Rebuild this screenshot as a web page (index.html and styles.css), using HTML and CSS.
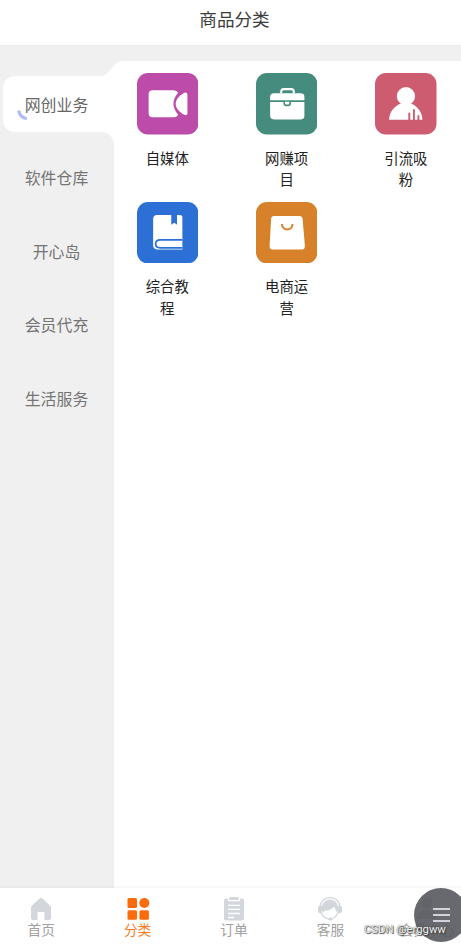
FILE: index.html
```
<!DOCTYPE html>
<html lang="zh-CN">
<head>
<meta charset="utf-8">
<title>商品分类</title>
<link rel="stylesheet" href="styles.css">
</head>
<body>
<div class="app">
  <header class="header">商品分类</header>
  <main class="main">
    <nav class="side">
      <div class="side-item active">网创业务
        <svg class="spinner" width="12" height="12" viewBox="0 0 12 12"><path d="M1.800 1.500C2 5.500 5 9.300 9.800 9.700" fill="none" stroke="#b0bcf6" stroke-width="3.300"/></svg>
      </div>
      <div class="side-item">软件仓库</div>
      <div class="side-item">开心岛</div>
      <div class="side-item">会员代充</div>
      <div class="side-item">生活服务</div>
    </nav>
    <section class="panel">
      <div class="card">
        <svg class="icon" viewBox="0 0 61 61"><rect width="61" height="61" rx="11" fill="#bc4ba9"/><path d="M15.500 17H36.500Q39.500 17 40.800 19.500Q31.500 30 40.800 41.500Q39.500 44 36.500 44H15.500Q11.500 44 11.500 40V21Q11.500 17 15.500 17Z" fill="#fff"/><path d="M47 19.500Q50 18.800 50 21.500V40Q50 42.500 47 41.500C35.500 35 35.500 26 47 19.500Z" fill="#fff"/></svg>
        <span class="label">自媒体</span>
      </div>
      <div class="card">
        <svg class="icon" viewBox="0 0 61 61"><rect width="61" height="61" rx="11" fill="#468c7e"/><path d="M25 20V18.500Q25 16 27.500 16H35Q37.500 16 37.500 18.500V20" fill="none" stroke="#fff" stroke-width="2"/><path d="M18 20H44.500Q48 20 48 23.500V27H14V23.500Q14 20 18 20ZM14 28.800H27.200V30Q27.200 33 30.200 33H31.800Q34.700 33 34.700 30V28.800H48V42.500Q48 46 44.500 46H18Q14 46 14 42.500Z" fill="#fff"/><path d="M28.800 28.500V30Q28.800 31.300 30 31.300H32Q33 31.300 33 30V28.500" fill="#fff"/></svg>
        <span class="label">网赚项目</span>
      </div>
      <div class="card">
        <svg class="icon" viewBox="0 0 61 61"><rect width="61" height="61" rx="11" fill="#ce5c71"/><circle cx="30.700" cy="23" r="9" fill="#fff"/><path d="M26 30H35.500C42 33 47 39 47 46.300H14C14 39 19 33 26 30Z" fill="#fff"/><path d="M34 39.500V47M38.600 36V47M43.100 42V47" stroke="#ce5c71" stroke-width="1.900"/></svg>
        <span class="label">引流吸粉</span>
      </div>
      <div class="card">
        <svg class="icon" viewBox="0 0 61 61"><rect width="61" height="61" rx="11" fill="#2d70d5"/><path d="M20 13H34V22.500L37 20.500L39.700 22.500V13H42Q45 13 45 15V47H20Q16 47 16 43V17Q16 13 20 13Z" fill="#fff"/><path d="M45 37.500H23Q18.500 37.500 18.500 41.500Q18.500 45.500 23 45.500H45" fill="none" stroke="#2d70d5" stroke-width="1.700"/></svg>
        <span class="label">综合教程</span>
      </div>
      <div class="card">
        <svg class="icon" viewBox="0 0 61 61"><rect width="61" height="61" rx="11" fill="#d7822b"/><path d="M18 14H43Q46 14 46.200 16.500L48.500 43.500Q48.500 47 46 47H16Q13.200 47 13.500 43.500L15 16.500Q15.200 14 18 14Z" fill="#fff"/><path d="M25.700 21.800C26 29 36 29 36.300 21.800" fill="none" stroke="#d7822b" stroke-width="2"/></svg>
        <span class="label">电商运营</span>
      </div>
    </section>
  </main>
  <footer class="tabs">
    <div class="tab">
      <svg class="tab-icon" viewBox="0 0 24 24"><path d="M10.300 1.800Q12 .3 13.700 1.800L21.500 9Q22 9.500 22 10.500V21Q22 23 20 23H15.500V16Q15.500 15 14.500 15H9.500Q8.500 15 8.500 16V23H4Q2 23 2 21V10.500Q2 9.500 2.500 9Z" fill="#d3d7dc"/></svg>
      <span>首页</span>
    </div>
    <div class="tab on">
      <svg class="tab-icon" viewBox="0 0 24 24"><g fill="#fb6b0b"><rect x="1.500" y="1" width="9.500" height="10" rx="1.500"/><circle cx="18.300" cy="6" r="5"/><rect x="1.500" y="13.200" width="9.500" height="9.500" rx="1.500"/><rect x="13.400" y="13.200" width="9.500" height="9.500" rx="1.500"/></g></svg>
      <span>分类</span>
    </div>
    <div class="tab">
      <svg class="tab-icon" viewBox="0 0 24 24"><path d="M4 1.500H20Q22 1.500 22 3.500V21.500Q22 23.500 20 23.500H4Q2 23.500 2 21.500V3.500Q2 1.500 4 1.500Z" fill="#d3d7dc"/><path d="M6.500 1V3.700H17.500V1M6 8.300H18M6 12.400H18M6 16.500H18M6 20.500H12" fill="none" stroke="#fff" stroke-width="1.300"/><path d="M7.500 0H16.500V3H7.500Z" fill="#d3d7dc"/></svg>
      <span>订单</span>
    </div>
    <div class="tab">
      <svg class="tab-icon" viewBox="0 0 24 24"><path d="M2 10C3-2.500 21-2.500 22 10" fill="none" stroke="#d3d7dc" stroke-width="1.300"/><path d="M4 13C2.500-1 21.500-1 20 13L19.500 16C18 14 17 12 16.500 9.500C13.500 13 9 13.500 6.500 14L5.500 16Z" fill="#d3d7dc"/><path d="M2.800 8.500Q-.5 9 -.5 12.500T2.800 16.500L4 16V9ZM21.200 8.500Q24.500 9 24.500 12.500T21.200 16.500L20 16V9Z" fill="#d3d7dc"/><path d="M3 15.500Q5.500 21.500 11 22M20 15Q18.500 20 15 21" fill="none" stroke="#d3d7dc" stroke-width="1.300"/><ellipse cx="12.500" cy="22" rx="2.500" ry="1.500" fill="#d3d7dc"/></svg>
      <span>客服</span>
    </div>
    <div class="tab">
      <svg class="tab-icon" viewBox="0 0 24 24"><circle cx="12" cy="6" r="5.500" fill="#d3d7dc"/><path d="M1 22C1 15 6 12.500 12 12.500S23 15 23 22Z" fill="#d3d7dc"/></svg>
      <span>会员中心</span>
    </div>
  </footer>
  <div class="fab"><i></i><i></i><i></i></div>
  <div class="watermark">CSDN @erggww</div>
</div>
</body>
</html>
```
FILE: styles.css
```
* { box-sizing: border-box; }
body {
  margin: 0;
  font-family: "Noto Sans CJK SC", sans-serif;
  background: #fff;
}
.app {
  position: relative;
  display: flex;
  flex-direction: column;
  height: 946px;
  overflow: hidden;
}
.header {
  height: 45px;
  line-height: 38px;
  padding-left: 8px;
  text-align: center;
  font-size: 17.6px;
  color: #3c3c3c;
}
.main {
  flex: 1;
  display: flex;
  padding-top: 15px;
  background: #f0f0f0;
  border-top: 1px solid #ebebeb;
}
.side {
  width: 114px;
  padding: 15px 0 0 3px;
  display: flex;
  flex-direction: column;
  gap: 17.4px;
}
.side-item {
  position: relative;
  height: 56px;
  padding-right: 4px;
  line-height: 57px;
  text-align: center;
  font-size: 15.9px;
  color: #747474;
}
.side-item.active {
  background: #fff;
  border-radius: 12px 0 0 12px;
  color: #666;
}
.active::before,
.active::after {
  content: "";
  position: absolute;
}
.active::before {
  top: -15px;
  right: -10px;
  width: 24px;
  height: 16px;
  background: #fff;
  clip-path: path("M0 15C8 15 10 8 14 4.500C17 1 20 0 24 0V16H0Z");
}
.active::after {
  right: 0;
  bottom: -12px;
  width: 12px;
  height: 12px;
  background: radial-gradient(circle at 0 100%, #f0f0f0 11.500px, #fff 12px);
}
.spinner {
  position: absolute;
  left: 14px;
  top: 33px;
}
.panel {
  flex: 1;
  display: grid;
  grid-template-columns: repeat(3, 62px);
  grid-auto-rows: 128.500px;
  column-gap: 57.300px;
  align-content: start;
  padding: 12px 0 0 22.300px;
  background: #fff;
  border-radius: 12px 0 0 0;
}
.card {
  display: flex;
  flex-direction: column;
  align-items: center;
}
.icon {
  width: 61.500px;
  height: 61.500px;
  flex: none;
}
.label {
  width: 45px;
  margin-top: 12px;
  text-align: center;
  font-size: 14.400px;
  line-height: 21.500px;
  color: #222;
}
.tabs {
  display: flex;
  height: 58px;
  margin: 0 -14px 0 -7px;
  padding-top: 9px;
  background: #fff;
  box-shadow: 0 -1px 3px rgba(0, 0, 0, .06);
  position: relative;
}
.tab {
  flex: 1;
  display: flex;
  flex-direction: column;
  align-items: center;
  font-size: 13.700px;
  line-height: 17px;
  color: #a0a0a0;
}
.tab.on { color: #fb7a20; }
.tab-icon {
  width: 24px;
  height: 24px;
}
.fab {
  position: absolute;
  left: 414px;
  top: 888px;
  width: 54px;
  height: 54px;
  border-radius: 50%;
  background: rgba(83, 84, 90, .88);
  display: flex;
  flex-direction: column;
  align-items: center;
  justify-content: center;
  gap: 3.500px;
}
.fab i {
  width: 17px;
  height: 2.300px;
  background: #d2d2da;
}
.watermark {
  position: absolute;
  left: 364px;
  top: 921px;
  font: 11.300px/17px Roboto, sans-serif;
  color: #f4f4f4;
  text-shadow: 0 0 1px #333, 1px 1px 1px #444;
  white-space: nowrap;
}
```
